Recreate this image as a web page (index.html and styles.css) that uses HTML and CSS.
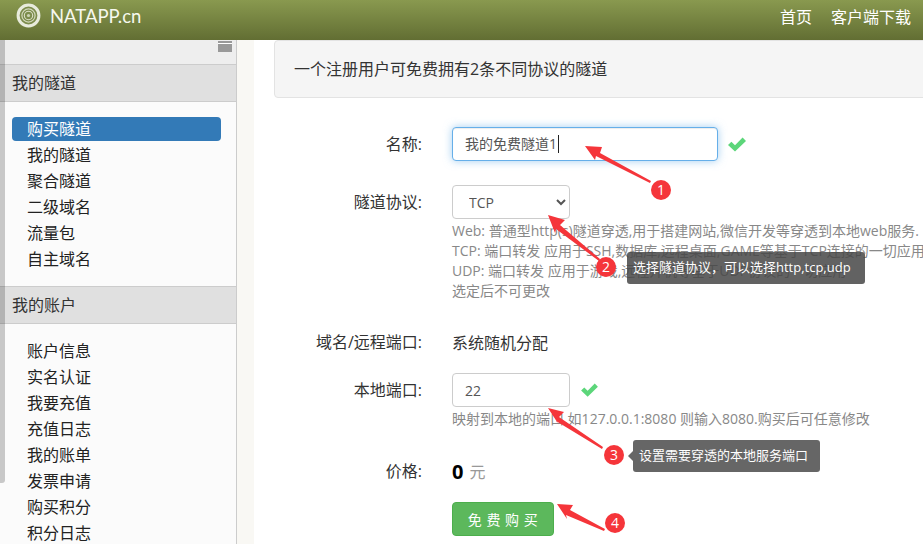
FILE: index.html
```html
<!DOCTYPE html>
<html lang="zh-CN">
<head>
<meta charset="utf-8">
<title>NATAPP.cn</title>
<link rel="stylesheet" href="styles.css">
</head>
<body>
<div class="page">
  <header class="topbar">
    <div class="brand">
      <svg class="logo" width="25" height="25" viewBox="0 0 25 25">
        <circle cx="12.5" cy="12.5" r="12.2" fill="#7c8c4c"/>
        <circle cx="12.5" cy="12.5" r="10.4" fill="none" stroke="#e8ebdc" stroke-width="3"/>
        <circle cx="12.5" cy="12.5" r="6.6" fill="none" stroke="#d3d9bd" stroke-width="1.2"/>
        <circle cx="12.5" cy="12.5" r="4.2" fill="none" stroke="#dde1ca" stroke-width="1.1"/>
        <circle cx="12.5" cy="12.5" r="1.6" fill="#cdd3b4"/>
      </svg>
      <span class="brand-name">NATAPP.cn</span>
    </div>
    <nav class="topnav"><a>首页</a><a>客户端下载</a></nav>
  </header>
  <div class="body">
    <aside class="sidebar">
      <div class="side-tools"><span class="side-toggle"></span></div>
      <h3 class="side-title">我的隧道</h3>
      <ul class="side-list">
        <li class="active">购买隧道</li>
        <li>我的隧道</li>
        <li>聚合隧道</li>
        <li>二级域名</li>
        <li>流量包</li>
        <li>自主域名</li>
      </ul>
      <h3 class="side-title">我的账户</h3>
      <ul class="side-list">
        <li>账户信息</li>
        <li>实名认证</li>
        <li>我要充值</li>
        <li>充值日志</li>
        <li>我的账单</li>
        <li>发票申请</li>
        <li>购买积分</li>
        <li>积分日志</li>
      </ul>
    </aside>
    <div class="strip"></div>
    <main class="main">
      <div class="well">一个注册用户可免费拥有2条不同协议的隧道</div>
      <form class="form">
        <div class="row row-name">
          <label class="lbl">名称:</label>
          <div class="field">
            <div class="text-input focused">我的免费隧道1<span class="caret"></span></div>
            <svg class="check" width="18" height="15" viewBox="0 0 18 15"><path d="M0 8 L3.4 4.8 L7 8.2 L14.6 0.6 L18 3.9 L7 14.6 Z" fill="#5cd67a"/></svg>
          </div>
        </div>
        <div class="row row-proto">
          <label class="lbl">隧道协议:</label>
          <div class="field"><select class="select"><option>TCP</option></select></div>
        </div>
        <div class="row">
          <span></span>
          <p class="help">Web: 普通型http(s)隧道穿透,用于搭建网站,微信开发等穿透到本地web服务.<br>TCP: 端口转发 应用于SSH,数据库,远程桌面,GAME等基于TCP连接的一切应用<br>UDP: 端口转发 应用于游戏,远程开机等基于UDP协议的一切应用<br>选定后不可更改</p>
        </div>
        <div class="row row-domain">
          <label class="lbl">域名/远程端口:</label>
          <div class="field plain">系统随机分配</div>
        </div>
        <div class="row row-port">
          <label class="lbl">本地端口:</label>
          <div class="field">
            <input class="port-input" value="22">
            <svg class="check check-port" width="17" height="14" viewBox="0 0 18 15"><path d="M0 8 L3.4 4.8 L7 8.2 L14.6 0.6 L18 3.9 L7 14.6 Z" fill="#5cd67a"/></svg>
          </div>
        </div>
        <div class="row">
          <span></span>
          <p class="help help-port">映射到本地的端口,如127.0.0.1:8080 则输入8080.购买后可任意修改</p>
        </div>
        <div class="row row-price">
          <label class="lbl">价格:</label>
          <div class="field plain"><strong class="amount">0</strong><span class="unit">元</span></div>
        </div>
        <div class="row row-submit">
          <span></span>
          <div class="field"><button type="button" class="buy">免 费 购 买</button></div>
        </div>
      </form>
    </main>
  </div>

  <div class="scrollbar"></div>

  <svg class="arrows" width="923" height="544" viewBox="0 0 923 544">
    <g fill="#f5353a">
      <polygon points="585,146 602,147 600,153 651,181 650,183 596,156 595,160"/>
      <polygon points="548,215 565,220 560,225 600,259 599,261 556,229 555,233"/>
      <polygon points="548,408 564,412 559,417 603,447 602,449 556,421 559,425"/>
      <polygon points="557,504 573,505 570,510 605,529 604,531 566,515 567,519"/>
    </g>
  </svg>
  <div class="tip tip-proto">选择隧道协议，可以选择http,tcp,udp</div>
  <div class="tip tip-port">设置需要穿透的本地服务端口</div>
  <span class="badge b1">1</span>
  <span class="badge b2">2</span>
  <span class="badge b3">3</span>
  <span class="badge b4">4</span>
</div>
</body>
</html>
```
FILE: styles.css
```css
* { box-sizing: border-box; }
html, body { margin: 0; padding: 0; }
body {
  font-family: "Open Sans", "Noto Sans CJK SC", sans-serif;
  font-size: 14px;
  color: #333;
  background: #fff;
}
.page {
  position: relative;
  width: 923px;
  height: 544px;
  overflow: hidden;
}
.topbar {
  height: 40px;
  display: flex;
  align-items: flex-start;
  justify-content: space-between;
  padding: 0 12px 0 16px;
  background: linear-gradient(#89994f, #626e33);
  color: #fff;
}
.brand { display: flex; align-items: center; gap: 9px; padding-top: 3px; }
.logo { display: block; }
.brand-name { font-family: Lato, "Open Sans", sans-serif; font-size: 18.5px; line-height: 24px; color: #f6f8ee; }
.topnav { display: flex; gap: 19px; font-size: 16px; line-height: 34px; }
.body { display: flex; height: 504px; }
.sidebar {
  width: 237px;
  flex: none;
  background: #fbfbfb;
  border-right: 1px solid #ccc;
}
.side-tools {
  height: 25px;
  background: #eee;
  border-bottom: 1px solid #ccc;
  padding: 1px 4px 0 0;
  display: flex;
  justify-content: flex-end;
}
.side-toggle {
  width: 14px;
  height: 11px;
  background: linear-gradient(#999 0 2px, #fff 2px 3px, #999 3px);
}
.side-title {
  margin: 0;
  height: 37px;
  padding-left: 12px;
  background: #e0e0e0;
  border-bottom: 1px solid #ccc;
  font-size: 16px;
  font-weight: 400;
  line-height: 37px;
  color: #333;
}
.side-list {
  list-style: none;
  margin: 0;
  padding: 14px 15px 14px 12px;
  font-size: 16px;
  color: #222;
  border-bottom: 1px solid #ccc;
}
.side-list li {
  height: 26px;
  line-height: 26px;
  padding-left: 15px;
  white-space: nowrap;
}
.side-list li.active {
  height: 24px;
  line-height: 24px;
  margin-top: 1px;
  margin-bottom: 1px;
  background: #337ab7;
  color: #fff;
  border-radius: 4px;
}
.strip { width: 17px; flex: none; background: #f9f8f4; }
.main { flex: 1; min-width: 0; padding-left: 20px; background: #fff; }
.well {
  width: 700px;
  height: 58px;
  padding-left: 19px;
  background: #f5f5f5;
  border: 1px solid #e3e3e3;
  border-radius: 4px;
  font-size: 16px;
  line-height: 56px;
  color: #333;
}
.form { margin-top: 29px; }
.row {
  display: grid;
  grid-template-columns: 148px 1fr;
  column-gap: 30px;
}
.lbl {
  text-align: right;
  font-size: 16px;
  line-height: 34px;
  color: #333;
  white-space: nowrap;
}
.field { display: flex; align-items: center; min-height: 34px; }
.plain { font-size: 16px; }
.text-input, .port-input, .select {
  height: 34px;
  background: #fff;
  border: 1px solid #ccc;
  border-radius: 4px;
  color: #555;
  font-family: inherit;
  font-size: 14px;
}
.text-input {
  width: 266px;
  padding-left: 12px;
  line-height: 32px;
  display: flex;
  align-items: center;
  border-color: #66afe9;
  box-shadow: inset 0 1px 1px rgba(0,0,0,.075), 0 0 8px rgba(102,175,233,.6);
}
.caret { width: 1px; height: 18px; margin-left: 1px; background: #222; }
.check { margin-left: 10px; }
.row-proto { margin-top: 24px; }
.select { width: 118px; padding-left: 12px; }
.help {
  margin: 2px 0 0;
  font-size: 14px;
  line-height: 20px;
  color: #888;
  white-space: nowrap;
}
.row-domain { margin-top: 24px; }
.row-port { margin-top: 14px; }
.port-input { width: 118px; padding: 0 12px; outline: 0; }
.check-port { margin-left: 11px; }
.help-port { margin-top: 2px; }
.row-price { margin-top: 25px; }
.amount { font-size: 20px; color: #000; font-weight: 700; }
.unit { margin-left: 6px; font-size: 16px; color: #999; }
.row-submit { margin-top: 14px; }
.buy {
  width: 102px;
  height: 34px;
  padding: 0;
  background: #5cb85c;
  border: 1px solid #4cae4c;
  border-radius: 4px;
  color: #fff;
  font-family: inherit;
  font-size: 14px;
  letter-spacing: .5px;
}
.scrollbar {
  position: absolute;
  left: 0;
  top: 40px;
  width: 5px;
  height: 443px;
  background: rgba(0,0,0,.2);
  border-bottom-right-radius: 3px;
}
.arrows { position: absolute; left: 0; top: 0; pointer-events: none; }
.tip {
  position: absolute;
  height: 32px;
  padding-left: 6px;
  color: #fff;
  font-size: 13px;
  line-height: 31px;
  border-radius: 3px;
  white-space: nowrap;
}
.tip-proto { left: 627px; top: 252px; width: 238px; background: rgba(70,70,70,.85); }
.tip-port { left: 633px; top: 440px; width: 187px; background: #666; }
.tip-port::before {
  content: "";
  position: absolute;
  left: -5px;
  top: 11px;
  border: 5px solid transparent;
  border-left: 0;
  border-right-color: #666;
}
.badge {
  position: absolute;
  width: 20px;
  height: 20px;
  border-radius: 50%;
  background: #f5353a;
  color: #fff;
  font-size: 14px;
  line-height: 20px;
  text-align: center;
}
.b1 { left: 651px; top: 180px; }
.b2 { left: 596px; top: 257px; }
.b3 { left: 604px; top: 445px; }
.b4 { left: 605px; top: 513px; }
```
